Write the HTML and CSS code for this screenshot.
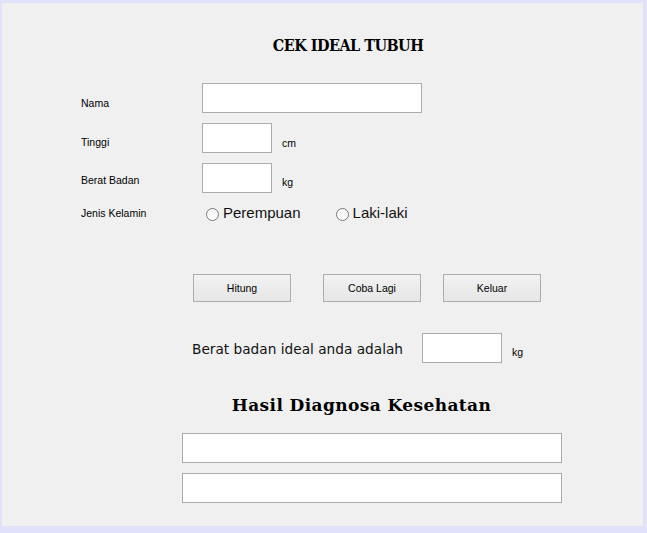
FILE: index.html
```html
<!DOCTYPE html>
<html>
<head>
<meta charset="utf-8">
<link rel="stylesheet" href="styles.css">
</head>
<body>
<div class="window">
  <div class="title">CEK IDEAL TUBUH</div>
  <div class="form">
    <div class="row row-nama">
      <span class="label lbl-nama">Nama</span>
      <span class="field f-nama"></span>
    </div>
    <div class="row">
      <span class="label lbl-tinggi">Tinggi</span>
      <span class="field f-small"></span>
      <span class="unit u-cm">cm</span>
    </div>
    <div class="row">
      <span class="label lbl-berat">Berat Badan</span>
      <span class="field f-small"></span>
      <span class="unit u-kg">kg</span>
    </div>
    <div class="row row-radio">
      <span class="label lbl-jenis">Jenis Kelamin</span>
      <span class="radio r-first"><span class="dot"></span><span class="rtext">Perempuan</span></span>
      <span class="radio r-second"><span class="dot"></span><span class="rtext">Laki-laki</span></span>
    </div>
  </div>
  <div class="buttons">
    <span class="btn">Hitung</span>
    <span class="btn b-coba">Coba Lagi</span>
    <span class="btn b-keluar">Keluar</span>
  </div>
  <div class="result">
    <span class="result-label">Berat badan ideal anda adalah</span>
    <span class="field f-result"></span>
    <span class="unit u-rkg">kg</span>
  </div>
  <div class="subtitle">Hasil Diagnosa Kesehatan</div>
  <div class="diag">
    <span class="field f-wide"></span>
    <span class="field f-wide"></span>
  </div>
</div>
</body>
</html>
```
FILE: styles.css
```css
html, body {
  margin: 0;
  padding: 0;
  background: #e1e1fa;
  width: 647px;
  height: 533px;
  overflow: hidden;
}
.window {
  margin: 3px 4px 0 2px;
  height: 523px;
  background: #f0f0f0;
  font-family: "Liberation Sans", Arial, sans-serif;
  color: #000;
  padding-top: 33px;
  box-sizing: border-box;
}
.title {
  font-family: "DejaVu Serif Condensed", "DejaVu Serif", serif;
  font-stretch: condensed;
  font-weight: bold;
  font-size: 16px;
  letter-spacing: -0.5px;
  line-height: 20px;
  height: 20px;
  text-align: center;
  padding-left: 51px;
}
.form {
  margin-top: 27px;
  padding-left: 79px;
  display: flex;
  flex-direction: column;
  gap: 10px;
}
.row {
  display: flex;
  align-items: flex-start;
  height: 30px;
}
.label {
  width: 121px;
  flex: none;
  font-size: 10.5px;
  line-height: 13px;
}
.lbl-nama { margin-top: 14px; }
.lbl-tinggi { margin-top: 13px; }
.lbl-berat { margin-top: 11px; }
.lbl-jenis { margin-top: 14px; }
.field {
  display: block;
  flex: none;
  box-sizing: border-box;
  height: 30px;
  background: #fff;
  border: 1px solid #ababab;
}
.f-nama { width: 220px; }
.f-small { width: 70px; }
.unit {
  font-size: 10.5px;
  line-height: 13px;
  margin-left: 10px;
}
.u-cm { margin-top: 14px; }
.u-kg { margin-top: 13px; }
.row-radio { margin-top: -10px; }
.radio {
  display: flex;
  align-items: flex-start;
}
.r-first { margin-left: 4px; }
.r-second { margin-left: 35px; }
.dot {
  width: 13px;
  height: 13px;
  box-sizing: border-box;
  border: 1px solid #7a7a7a;
  border-radius: 50%;
  background: linear-gradient(#f4f4f4, #ffffff);
  margin-top: 15px;
  flex: none;
}
.rtext {
  font-size: 15px;
  line-height: 17px;
  margin-top: 11px;
  margin-left: 4px;
  color: #111;
}
.buttons {
  display: flex;
  margin-top: 51px;
  padding-left: 191px;
}
.btn {
  width: 98px;
  height: 28px;
  box-sizing: border-box;
  border: 1px solid #adadad;
  background: linear-gradient(#f2f2f2, #e6e6e6);
  display: flex;
  align-items: center;
  justify-content: center;
  font-size: 10.5px;
  line-height: 13px;
}
.b-coba { margin-left: 32px; }
.b-keluar { margin-left: 22px; }
.result {
  display: flex;
  align-items: flex-start;
  margin-top: 31px;
  padding-left: 190px;
  height: 30px;
}
.result-label {
  width: 230px;
  flex: none;
  font-family: "DejaVu Sans", sans-serif;
  font-size: 13.7px;
  line-height: 16px;
  margin-top: 8px;
  color: #111;
}
.f-result { width: 80px; }
.u-rkg { margin-top: 13px; }
.subtitle {
  margin-top: 32px;
  font-family: "DejaVu Serif", serif;
  font-weight: bold;
  font-size: 17px;
  letter-spacing: 0.4px;
  line-height: 20px;
  height: 20px;
  text-align: center;
  padding-left: 78px;
}
.diag {
  margin-top: 18px;
  padding-left: 180px;
  display: flex;
  flex-direction: column;
  gap: 10px;
}
.f-wide { width: 380px; }
```
